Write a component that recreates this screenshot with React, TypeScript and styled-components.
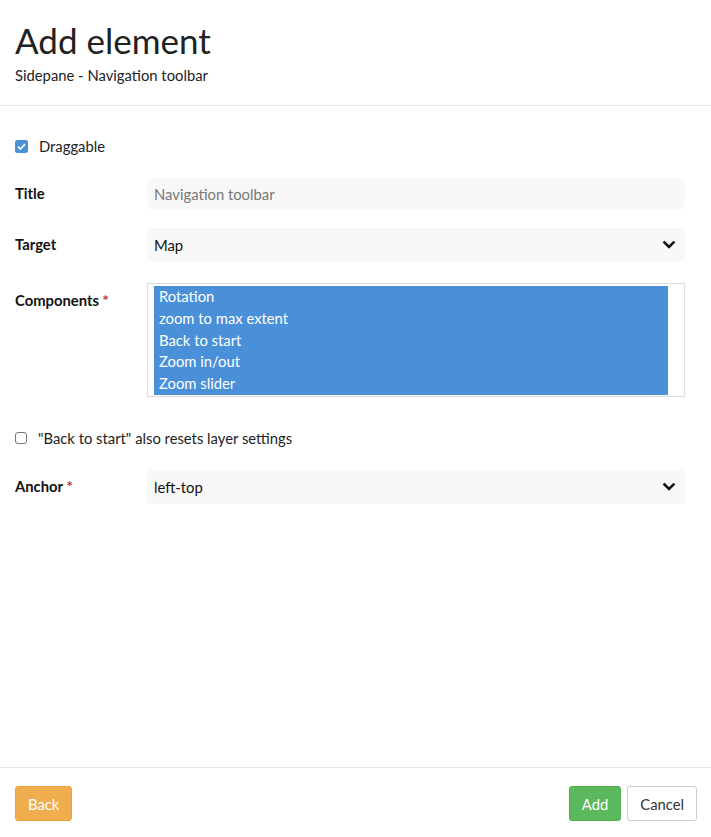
import React from "react";
import styled, {createGlobalStyle} from "styled-components";

const GlobalStyle = createGlobalStyle`
  html, body {
    margin: 0;
    padding: 0;
    background: #fff;
  }
  body {
    font-family: Lato, "Noto Sans", sans-serif;
    color: #333;
  }
`

const components = ["Rotation", "zoom to max extent", "Back to start", "Zoom in/out", "Zoom slider"]

const Chevron = () => (
	<svg width="14" height="14" viewBox="0 0 14 14">
		<path d="M2.5 4.5 L7 9 L11.5 4.5" fill="none" stroke="#111" strokeWidth="2.6" strokeLinecap="square"/>
	</svg>
)

const Check = () => (
	<svg width="13" height="13" viewBox="0 0 13 13">
		<rect x="0" y="0" width="13" height="13" rx="2.5" fill="#4a90d9"/>
		<path d="M3 6.7 L5.4 9 L10 4.2" fill="none" stroke="#fff" strokeWidth="1.8"/>
	</svg>
)

export default function App() {
	return (
		<Page>
			<GlobalStyle/>
			<Header>
				<Heading>Add element</Heading>
				<Subtitle>Sidepane - Navigation toolbar</Subtitle>
			</Header>
			<Body>
				<CheckRow>
					<Check/>
					<span>Draggable</span>
				</CheckRow>
				<Field>
					<Label>Title</Label>
					<TextInput placeholder="Navigation toolbar"/>
				</Field>
				<Field>
					<Label>Target</Label>
					<Select>
						<span>Map</span>
						<Chevron/>
					</Select>
				</Field>
				<Field $top>
					<Label $pad>Components <Required>*</Required></Label>
					<ListBox>
						<Options>
							{components.map(c => <Option key={c}>{c}</Option>)}
						</Options>
					</ListBox>
				</Field>
				<CheckRow>
					<EmptyBox/>
					<span>"Back to start" also resets layer settings</span>
				</CheckRow>
				<Field>
					<Label>Anchor <Required>*</Required></Label>
					<Select>
						<span>left-top</span>
						<Chevron/>
					</Select>
				</Field>
			</Body>
			<Footer>
				<Button $variant="warning">Back</Button>
				<Spacer/>
				<Button $variant="success">Add</Button>
				<Button $variant="default">Cancel</Button>
			</Footer>
		</Page>
	)
}

const Page = styled.div`
  width: 711px;
  height: 837px;
  display: flex;
  flex-direction: column;
`
const Header = styled.div`
  padding: 20px 15px 21px;
  border-bottom: 1px solid #e5e5e5;
`
const Heading = styled.h1`
  margin: 0;
  font-size: 35px;
  font-weight: 400;
  line-height: 40px;
  color: #222;
`
const Subtitle = styled.div`
  margin-top: 6px;
  font-size: 14.8px;
  line-height: 18px;
  color: #222;
`
const Body = styled.div`
  flex: 1;
  padding: 30px 26px 0 15px;
  display: flex;
  flex-direction: column;
  gap: 18px;
`
const CheckRow = styled.label`
  display: flex;
  align-items: center;
  gap: 11px;
  font-size: 14.8px;
  color: #222;
  height: 20px;
  margin-bottom: 4px;
`
const EmptyBox = styled.span`
  width: 10px;
  height: 10px;
  border: 1.5px solid #777;
  border-radius: 3px;
`
const Field = styled.div<{ $top?: boolean }>`
  display: grid;
  grid-template-columns: 132px 1fr;
  align-items: ${p => p.$top ? "start" : "center"};
  ${p => p.$top && "margin: 3px 0 13px;"}
`
const Label = styled.div<{ $pad?: boolean }>`
  font-size: 14.8px;
  font-weight: 700;
  color: #111;
  padding-top: ${p => p.$pad ? "8px" : "0"};
  padding-bottom: ${p => p.$pad ? "0" : "3px"};
`
const Required = styled.span`
  color: #c9302c;
`
const TextInput = styled.input`
  box-sizing: border-box;
  height: 32px;
  width: 100%;
  border: none;
  background: #f8f8f8;
  border-radius: 8px;
  padding: 0 7px;
  font: inherit;
  font-size: 14.8px;
  color: #333;
  outline: none;

  &::placeholder {
    color: #777;
  }
`
const Select = styled.div`
  box-sizing: border-box;
  height: 34px;
  background: #f8f8f8;
  border-radius: 4px;
  padding: 0 9px 0 7px;
  display: flex;
  align-items: center;
  justify-content: space-between;
  font-size: 14.8px;
  color: #111;
`
const ListBox = styled.div`
  box-sizing: border-box;
  height: 114px;
  border: 1px solid #ddd;
  padding: 2px 16px 2px 6px;
`
const Options = styled.div`
  background: #4a90d9;
  height: 109px;
  display: flex;
  flex-direction: column;
`
const Option = styled.div`
  color: #fff;
  font-size: 14.8px;
  line-height: 21.8px;
  padding-left: 5px;
`
const Footer = styled.div`
  border-top: 1px solid #e5e5e5;
  padding: 18px 14px 16px 15px;
  display: flex;
  gap: 6px;
`
const Spacer = styled.div`
  flex: 1;
`
const variants = {
	warning: {bg: "#f0ad4e", border: "#eea236", color: "#fff"},
	success: {bg: "#5cb85c", border: "#4cae4c", color: "#fff"},
	default: {bg: "#fff", border: "#ccc", color: "#333"},
}
const Button = styled.button<{ $variant: keyof typeof variants }>`
  height: 35px;
  padding: 0 12px;
  font: inherit;
  font-size: 14.8px;
  border-radius: 3px;
  background: ${p => variants[p.$variant].bg};
  border: 1px solid ${p => variants[p.$variant].border};
  color: ${p => variants[p.$variant].color};
`
